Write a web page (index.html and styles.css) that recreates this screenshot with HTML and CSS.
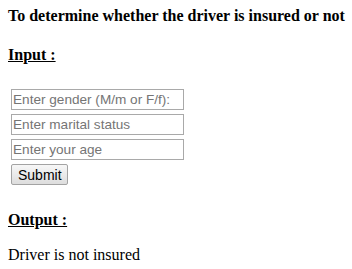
FILE: index.html
```html
<!DOCTYPE html>
<html>
<head>
<meta charset="utf-8">
<link rel="stylesheet" href="styles.css">
</head>
<body>
<div class="page">
  <h4 class="title">To determine whether the driver is insured or not</h4>
  <h4 class="section input-head"><u>Input :</u></h4>
  <form class="form">
    <input class="field" type="text" placeholder="Enter gender (M/m or F/f):">
    <input class="field" type="text" placeholder="Enter marital status">
    <input class="field" type="text" placeholder="Enter your age">
    <button class="submit" type="button">Submit</button>
  </form>
  <h4 class="section output-head"><u>Output :</u></h4>
  <p class="result">Driver is not insured</p>
</div>
</body>
</html>
```
FILE: styles.css
```css
html, body {
  margin: 0;
  padding: 0;
  background: #ffffff;
}
.page {
  padding: 0 0 0 8px;
  font-family: "Liberation Serif", "Times New Roman", serif;
  font-size: 16px;
  line-height: 18px;
  color: #000;
  display: flex;
  flex-direction: column;
  align-items: flex-start;
}
.title {
  margin: 7px 0 0 0;
  font-size: 16px;
  font-weight: bold;
  line-height: 18px;
}
.section {
  margin: 0;
  font-size: 16px;
  font-weight: bold;
  line-height: 18px;
}
.input-head {
  margin-top: 21px;
}
.form {
  margin: 25px 0 0 3px;
  display: flex;
  flex-direction: column;
  align-items: flex-start;
  gap: 4px;
}
.field {
  box-sizing: border-box;
  width: 173px;
  height: 21px;
  margin: 0;
  padding: 1px 1px;
  border: 1px solid #a9a9a9;
  border-radius: 0;
  font-family: "Liberation Sans", Arial, sans-serif;
  font-size: 13.6px;
  color: #000;
  background: #fff;
  outline: none;
}
.field::placeholder {
  color: #757575;
  opacity: 1;
}
.submit {
  box-sizing: border-box;
  width: 57px;
  height: 21px;
  margin: 0;
  padding: 0 6px;
  border: 1px solid #a3a3a3;
  border-radius: 2px;
  background: linear-gradient(#f7f7f7, #dddddd);
  font-family: "Liberation Sans", Arial, sans-serif;
  font-size: 14px;
  color: #000;
}
.output-head {
  margin-top: 26px;
}
.result {
  margin: 17px 0 0 0;
  font-size: 16px;
  line-height: 18px;
}
```
